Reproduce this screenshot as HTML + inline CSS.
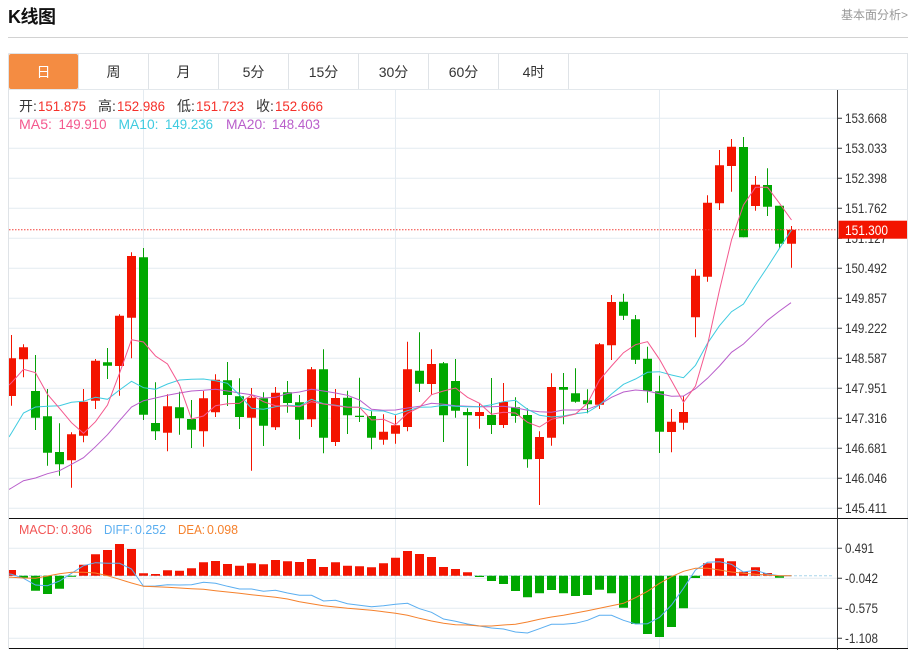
<!DOCTYPE html>
<html lang="zh">
<head>
<meta charset="utf-8">
<title>K线图</title>
<style>
html,body{margin:0;padding:0;background:#fff;width:916px;height:650px;overflow:hidden}
svg{display:block}
text{font-family:"Liberation Sans","Noto Sans CJK SC",sans-serif}
.h{font-size:14px;fill:#333}
.r{font-size:14px;fill:#f5302a}
.a{font-size:13.5px;fill:#333}
.t{font-size:14px;fill:#333}
</style>
</head>
<body>
<svg width="916" height="650" viewBox="0 0 916 650" xmlns="http://www.w3.org/2000/svg">
<defs><clipPath id="c"><rect x="9" y="90" width="828" height="558"/></clipPath></defs>

<text x="8" y="23" font-size="18" font-weight="700" fill="#111" textLength="48">K线图</text>
<text x="841" y="19" font-size="12" fill="#999">基本面分析&gt;</text>
<path d="M8 37.5H908" stroke="#d2d2d2" fill="none"/>

<path d="M8.5 53.5H907.5V649M8.5 53.5V649" stroke="#dfe3e7" fill="none"/>
<path d="M9 89.5H907.5" stroke="#e3e8ec" fill="none"/>
<rect x="9" y="54" width="69" height="35" rx="2" fill="#f48c42"/>
<path d="M78.5 54V89M148.5 54V89M218.5 54V89M288.5 54V89M358.5 54V89M428.5 54V89M498.5 54V89M568.5 54V89" stroke="#dfe3e7" fill="none"/>
<text x="43.5" y="77" text-anchor="middle" font-size="14" fill="#fff">日</text>
<text x="113.5" y="77" text-anchor="middle" class="t">周</text>
<text x="183.5" y="77" text-anchor="middle" class="t">月</text>
<text x="253.5" y="77" text-anchor="middle" class="t">5分</text>
<text x="323.5" y="77" text-anchor="middle" class="t">15分</text>
<text x="393.5" y="77" text-anchor="middle" class="t">30分</text>
<text x="463.5" y="77" text-anchor="middle" class="t">60分</text>
<text x="533.5" y="77" text-anchor="middle" class="t">4时</text>

<path d="M9 118.3H837M9 148.3H837M9 178.3H837M9 208.3H837M9 238.3H837M9 268.3H837M9 298.3H837M9 328.3H837M9 358.3H837M9 388.3H837M9 418.3H837M9 448.3H837M9 478.3H837M9 508.3H837M9 548.3H837M9 578.3H837M9 608.3H837M9 638.3H837M143.5 90V648M395.5 90V648M659.5 90V648" stroke="#e4ebf1" fill="none"/>

<g clip-path="url(#c)">
<path fill="none" stroke="#f31400" d="M11.5 335V405.7M23.5 344.3V377.3M71.5 432.3V487.7M83.5 389V442.3M95.5 359V409M119.5 314.3V395.7M131.5 252.3V358.3M167.5 394.3V451.3M203.5 391V446.7M215.5 374.3V417M251.5 388V470.7M275.5 387V430M311.5 367V427M335.5 389V446M383.5 414.3V444.7M395.5 415.3V443.7M407.5 341.7V431.3M431.5 349.3V395M479.5 403.3V428.7M503.5 383V428M539.5 431.3V505M551.5 373.3V445.7M599.5 343V409M611.5 295V360M671.5 409V452.3M683.5 395.7V429.7M695.5 269.3V337.3M707.5 195.3V281.7M719.5 150V210M731.5 139V191.7M755.5 176V210.7M791.5 226V267.7"/>
<path fill="none" stroke="#07a107" d="M35.5 355V430M47.5 389V465.7M59.5 423.3V475.7M107.5 348V379M143.5 248V420M155.5 382.3V440M179.5 391.7V434.7M191.5 400V448M227.5 362V406M239.5 378.3V429M263.5 392.3V446M287.5 381V412.7M299.5 395V439.3M323.5 349.3V453.3M347.5 390.7V434M359.5 377.7V422M371.5 411.3V449.3M419.5 332.3V392M443.5 362V442M455.5 359V417.7M467.5 408.3V466M491.5 378V434M515.5 397.3V422.7M527.5 408.3V467.7M563.5 373V424.3M575.5 368.3V402.7M587.5 389.3V413.3M623.5 293.7V320M635.5 315V364M647.5 346.7V402.7M659.5 375.7V453M743.5 137V237.3M767.5 168.3V216M779.5 205.7V248.3"/>
<path fill="#f31400" d="M7 358.3h9V396h-9zM19 347.3h9V359.3h-9zM67 434.3h9V460.3h-9zM79 401.7h9V435.7h-9zM91 360.7h9V400.7h-9zM115 315.7h9V366h-9zM127 256h9V317.7h-9zM163 406.3h9V432.7h-9zM199 398.3h9V431.3h-9zM211 379.7h9V412.3h-9zM247 397.7h9V417.7h-9zM271 392.7h9V427.3h-9zM307 369.3h9V419.3h-9zM331 398h9V442h-9zM379 431.7h9V439.7h-9zM391 425.3h9V433.7h-9zM403 369.3h9V427h-9zM427 364h9V384h-9zM475 412h9V416h-9zM499 402h9V425h-9zM535 437h9V459h-9zM547 387h9V437.7h-9zM595 344.3h9V404.7h-9zM607 302h9V345.3h-9zM667 421.7h9V432h-9zM679 412h9V422.7h-9zM691 275.7h9V317.3h-9zM703 202.7h9V276.7h-9zM715 165.3h9V203.3h-9zM727 146.7h9V166h-9zM751 184.7h9V206h-9zM787 229.7h9V243.7h-9z"/>
<path fill="#00a800" d="M31 391h9V417.7h-9zM43 416.3h9V452.7h-9zM55 452h9V464.3h-9zM103 362.3h9V365.7h-9zM139 257.3h9V414.7h-9zM151 423h9V431.3h-9zM175 407.3h9V418.3h-9zM187 419h9V429.7h-9zM223 380.3h9V395h-9zM235 396.3h9V417h-9zM259 398.3h9V425.7h-9zM283 392.3h9V403h-9zM295 402.3h9V419.7h-9zM319 369.3h9V437.7h-9zM343 397.7h9V415.3h-9zM355 415.7h9V417h-9zM367 416h9V437.7h-9zM415 370.7h9V383.7h-9zM439 363.3h9V415.3h-9zM451 381h9V410.7h-9zM463 412h9V415.3h-9zM487 415h9V425h-9zM511 407.3h9V416h-9zM523 415h9V459.3h-9zM559 387h9V389.7h-9zM571 393.3h9V401.7h-9zM583 400.3h9V404.3h-9zM619 301.7h9V315.7h-9zM631 319.3h9V359.7h-9zM643 358.7h9V391h-9zM655 391.3h9V431.7h-9zM739 147h9V237.3h-9zM763 185h9V206.7h-9zM775 205.7h9V243.7h-9z"/>

<polyline fill="none" stroke="#b95ecb" points="9,489.5 11.5,488 23.5,480.7 35.5,478 47.5,473.7 59.5,470.7 71.5,464.3 83.5,457.7 95.5,446.7 107.5,434.7 119.5,420.7 131.5,407 143.5,400.7 155.5,398 167.5,395.3 179.5,393 191.5,391 203.5,390.3 215.5,389.3 227.5,391 239.5,393 251.5,394.7 263.5,398 275.5,397.3 287.5,393.5 299.5,392 311.5,389.3 323.5,391 335.5,393 347.5,395.3 359.5,400 371.5,409.3 383.5,410.3 395.5,410 407.5,408 419.5,406.3 431.5,403.3 443.5,404.3 455.5,405.7 467.5,406.3 479.5,406.7 491.5,406.7 503.5,406.3 515.5,407.7 527.5,410.3 539.5,411.7 551.5,412.3 563.5,410 575.5,410 587.5,409.3 599.5,404.7 611.5,397.3 623.5,392 635.5,390 647.5,391 659.5,393.7 671.5,396.3 683.5,396 695.5,388.7 707.5,378.3 719.5,366 731.5,352.3 743.5,344 755.5,332.3 767.5,320.3 779.5,311 791,302.7"/>
<polyline fill="none" stroke="#3fcbe0" points="9,437 11.5,433 23.5,413 35.5,407 47.5,406.3 59.5,405.7 71.5,402.3 83.5,401.3 95.5,397.3 107.5,399.3 119.5,390 131.5,381.3 143.5,387.7 155.5,389.3 167.5,384 179.5,380 191.5,379.3 203.5,379 215.5,380.7 227.5,383.3 239.5,395 251.5,408.3 263.5,409.3 275.5,406.7 287.5,405.3 299.5,406 311.5,399.3 323.5,403.7 335.5,405.3 347.5,407 359.5,407.3 371.5,410.7 383.5,411 395.5,414.7 407.5,410.7 419.5,407.3 431.5,407 443.5,405.3 455.5,406.3 467.5,406.7 479.5,406.7 491.5,404.7 503.5,401.7 515.5,400.3 527.5,409.3 539.5,415.3 551.5,417 563.5,416 575.5,413.7 587.5,412.3 599.5,405 611.5,394 623.5,384.3 635.5,379 647.5,372.3 659.5,371.7 671.5,375 683.5,377.7 695.5,365.3 707.5,343.3 719.5,325.7 731.5,311.7 743.5,304 755.5,285 767.5,267 779.5,248.3 791.5,230"/>
<polyline fill="none" stroke="#f4588e" points="9,385 11.5,382.7 23.5,369.3 35.5,372.7 47.5,394.3 59.5,408.3 71.5,422.7 83.5,433.3 95.5,421.7 107.5,405 119.5,373.3 131.5,339.7 143.5,342 155.5,356 167.5,364 179.5,385 191.5,419 203.5,416 215.5,405.7 227.5,403.7 239.5,403.3 251.5,395 263.5,401.7 275.5,405.7 287.5,406 299.5,406.7 311.5,401.7 323.5,404 335.5,405.7 347.5,407.3 359.5,407.3 371.5,420 383.5,419.3 395.5,424.7 407.5,413.3 419.5,407.3 431.5,394.7 443.5,391 455.5,388 467.5,397.3 479.5,403.3 491.5,414.3 503.5,412.3 515.5,413 527.5,422.3 539.5,427 551.5,419.3 563.5,416.7 575.5,414 587.5,403.3 599.5,380 611.5,366 623.5,352.7 635.5,344.7 647.5,341.7 659.5,359.3 671.5,380.7 683.5,402.3 695.5,386 707.5,345 719.5,290 731.5,240 743.5,205 755.5,187.3 767.5,187.3 779.5,203.3 791.5,220"/>

<path d="M9 575.7H834" stroke="#a9d5ea" stroke-dasharray="3 2" fill="none"/>
<path fill="#f31400" d="M7 570h9v5.7h-9zM79 564.7h9v11h-9zM91 554.3h9v21.4h-9zM103 550h9v25.7h-9zM115 544h9v31.7h-9zM127 549h9v26.7h-9zM139 573.3h9v2.4h-9zM151 574h9v1.7h-9zM163 570.3h9v5.4h-9zM175 570.7h9v5h-9zM187 568.3h9v7.4h-9zM199 562.3h9v13.4h-9zM211 561h9v14.7h-9zM223 564h9v11.7h-9zM235 565.7h9v10h-9zM247 563.3h9v12.4h-9zM259 564.3h9v11.4h-9zM271 560h9v15.7h-9zM283 561.3h9v14.4h-9zM295 562h9v13.7h-9zM307 559h9v16.7h-9zM319 567h9v8.7h-9zM331 562.3h9v13.4h-9zM343 565.7h9v10h-9zM355 566.3h9v9.4h-9zM367 567.3h9v8.4h-9zM379 563.3h9v12.4h-9zM391 557.7h9v18h-9zM403 551h9v24.7h-9zM415 554h9v21.7h-9zM427 557h9v18.7h-9zM439 567h9v8.7h-9zM451 569h9v6.7h-9zM463 572.3h9v3.4h-9zM703 563.3h9v12.4h-9zM715 558.3h9v17.4h-9zM727 561.3h9v14.4h-9zM739 571.7h9v4h-9zM751 567.3h9v8.4h-9zM763 573h9v2.7h-9z"/>
<path fill="#00a800" d="M19 575.7h9v2h-9zM31 575.7h9v15h-9zM43 575.7h9v18.3h-9zM55 575.7h9v13h-9zM67 575.7h9v1h-9zM475 575.7h9v1.3h-9zM487 575.7h9v5.3h-9zM499 575.7h9v8.3h-9zM511 575.7h9v15.3h-9zM523 575.7h9v21.6h-9zM535 575.7h9v17.6h-9zM547 575.7h9v14.3h-9zM559 575.7h9v17.6h-9zM571 575.7h9v20.3h-9zM583 575.7h9v19.3h-9zM595 575.7h9v14h-9zM607 575.7h9v17.6h-9zM619 575.7h9v32h-9zM631 575.7h9v48.3h-9zM643 575.7h9v58.3h-9zM655 575.7h9v61.3h-9zM667 575.7h9v51.3h-9zM679 575.7h9v32.6h-9zM691 575.7h9v2.3h-9zM775 575.7h9v2h-9z"/>

<polyline fill="none" stroke="#5aaef0" points="9,574 11.5,574.3 23.5,578.3 35.5,585 47.5,585.7 59.5,581 71.5,573.3 83.5,565.7 95.5,562.7 107.5,563.3 119.5,563.3 131.5,569 143.5,586.3 155.5,586 167.5,584.7 179.5,585 191.5,584.7 203.5,582.3 215.5,583.3 227.5,586.3 239.5,589 251.5,589 263.5,591.3 275.5,590.3 287.5,593 299.5,595.3 311.5,595.3 323.5,601 335.5,600.3 347.5,603.7 359.5,605.3 371.5,606.7 383.5,605.7 395.5,604.3 407.5,603.3 419.5,608.7 431.5,612.3 443.5,619 455.5,621.3 467.5,624 479.5,626 491.5,628 503.5,629 515.5,632 527.5,633 539.5,628.7 551.5,624.3 563.5,624.3 575.5,623.3 587.5,620.3 599.5,615.3 611.5,615.3 623.5,620.3 635.5,624 647.5,623.7 659.5,617.3 671.5,605 683.5,588.3 695.5,570 707.5,562.3 719.5,561.7 731.5,564.3 743.5,572 755.5,570.3 767.5,574 779.5,575.7 791.5,575.7"/>
<polyline fill="none" stroke="#f5812c" points="9,577.3 11.5,577.3 23.5,578 35.5,578.3 47.5,576 59.5,573.7 71.5,572.3 83.5,572.3 95.5,573 107.5,575.7 119.5,579.3 131.5,583 143.5,586.3 155.5,586.7 167.5,587.3 179.5,588 191.5,588.7 203.5,589.3 215.5,590.7 227.5,592 239.5,593.3 251.5,594.7 263.5,596 275.5,597.3 287.5,599 299.5,601.7 311.5,603.7 323.5,605.7 335.5,607 347.5,608.3 359.5,609.3 371.5,610.3 383.5,611.7 395.5,613.3 407.5,615.3 419.5,618.3 431.5,621 443.5,623.3 455.5,624.7 467.5,625 479.5,626 491.5,626 503.5,625 515.5,624.3 527.5,622 539.5,619.3 551.5,617 563.5,615.3 575.5,613 587.5,610.7 599.5,608.3 611.5,605.7 623.5,603.3 635.5,597.7 647.5,591.3 659.5,583.3 671.5,576.7 683.5,571.3 695.5,568.3 707.5,568.3 719.5,570 731.5,572 743.5,573.3 755.5,574.3 767.5,575 779.5,575.7 791.5,575.7"/>
</g>

<path d="M9 229.7H838" stroke="#f4403a" stroke-dasharray="1.5 1.5" fill="none"/>

<path d="M9 518.5H908M9 648.5H908" stroke="#111" fill="none"/>
<path d="M837.5 90V650" stroke="#333" fill="none"/>
<path d="M838 118.3h4M838 148.3h4M838 178.3h4M838 208.3h4M838 238.3h4M838 268.3h4M838 298.3h4M838 328.3h4M838 358.3h4M838 388.3h4M838 418.3h4M838 448.3h4M838 478.3h4M838 508.3h4M838 548.3h4M838 578.3h4M838 608.3h4M838 638.3h4" stroke="#333" fill="none"/>

<g class="a">
<text class="a" x="845" y="123" textLength="42" lengthAdjust="spacingAndGlyphs">153.668</text>
<text class="a" x="845" y="153" textLength="42" lengthAdjust="spacingAndGlyphs">153.033</text>
<text class="a" x="845" y="183" textLength="42" lengthAdjust="spacingAndGlyphs">152.398</text>
<text class="a" x="845" y="213" textLength="42" lengthAdjust="spacingAndGlyphs">151.762</text>
<text class="a" x="845" y="243" textLength="42" lengthAdjust="spacingAndGlyphs">151.127</text>
<text class="a" x="845" y="273" textLength="42" lengthAdjust="spacingAndGlyphs">150.492</text>
<text class="a" x="845" y="303" textLength="42" lengthAdjust="spacingAndGlyphs">149.857</text>
<text class="a" x="845" y="333" textLength="42" lengthAdjust="spacingAndGlyphs">149.222</text>
<text class="a" x="845" y="363" textLength="42" lengthAdjust="spacingAndGlyphs">148.587</text>
<text class="a" x="845" y="393" textLength="42" lengthAdjust="spacingAndGlyphs">147.951</text>
<text class="a" x="845" y="423" textLength="42" lengthAdjust="spacingAndGlyphs">147.316</text>
<text class="a" x="845" y="453" textLength="42" lengthAdjust="spacingAndGlyphs">146.681</text>
<text class="a" x="845" y="483" textLength="42" lengthAdjust="spacingAndGlyphs">146.046</text>
<text class="a" x="845" y="513" textLength="42" lengthAdjust="spacingAndGlyphs">145.411</text>
<text class="a" x="845" y="553" textLength="29" lengthAdjust="spacingAndGlyphs">0.491</text>
<text class="a" x="845" y="583" textLength="33" lengthAdjust="spacingAndGlyphs">-0.042</text>
<text class="a" x="845" y="613" textLength="33" lengthAdjust="spacingAndGlyphs">-0.575</text>
<text class="a" x="845" y="643" textLength="33" lengthAdjust="spacingAndGlyphs">-1.108</text>
</g>
<rect x="838.5" y="220.7" width="68.5" height="18" fill="#f31400"/>
<text x="845" y="235" font-size="14" fill="#fff" textLength="43" lengthAdjust="spacingAndGlyphs">151.300</text>

<text class="h" x="19" y="111">开:</text>
<text class="r" x="38" y="111" textLength="48" lengthAdjust="spacingAndGlyphs">151.875</text>
<text class="h" x="98" y="111">高:</text>
<text class="r" x="117" y="111" textLength="48" lengthAdjust="spacingAndGlyphs">152.986</text>
<text class="h" x="177" y="111">低:</text>
<text class="r" x="196" y="111" textLength="48" lengthAdjust="spacingAndGlyphs">151.723</text>
<text class="h" x="256" y="111">收:</text>
<text class="r" x="275" y="111" textLength="48" lengthAdjust="spacingAndGlyphs">152.666</text>

<text x="19" y="129" font-size="14" fill="#f4588e" textLength="33" lengthAdjust="spacingAndGlyphs">MA5:</text>
<text x="58.500" y="129" font-size="14" fill="#f4588e" textLength="48" lengthAdjust="spacingAndGlyphs">149.910</text>
<text x="118.500" y="129" font-size="14" fill="#3fcbe0" textLength="40" lengthAdjust="spacingAndGlyphs">MA10:</text>
<text x="165" y="129" font-size="14" fill="#3fcbe0" textLength="48" lengthAdjust="spacingAndGlyphs">149.236</text>
<text x="226" y="129" font-size="14" fill="#b95ecb" textLength="40" lengthAdjust="spacingAndGlyphs">MA20:</text>
<text x="272" y="129" font-size="14" fill="#b95ecb" textLength="48" lengthAdjust="spacingAndGlyphs">148.403</text>

<text x="19" y="534" font-size="13" fill="#f25555" textLength="40" lengthAdjust="spacingAndGlyphs">MACD:</text>
<text x="61" y="534" font-size="13" fill="#f25555" textLength="31" lengthAdjust="spacingAndGlyphs">0.306</text>
<text x="104" y="534" font-size="13" fill="#5aaef0" textLength="29" lengthAdjust="spacingAndGlyphs">DIFF:</text>
<text x="135" y="534" font-size="13" fill="#5aaef0" textLength="31" lengthAdjust="spacingAndGlyphs">0.252</text>
<text x="178" y="534" font-size="13" fill="#f5812c" textLength="27" lengthAdjust="spacingAndGlyphs">DEA:</text>
<text x="207" y="534" font-size="13" fill="#f5812c" textLength="31" lengthAdjust="spacingAndGlyphs">0.098</text>
</svg>
</body>
</html>
